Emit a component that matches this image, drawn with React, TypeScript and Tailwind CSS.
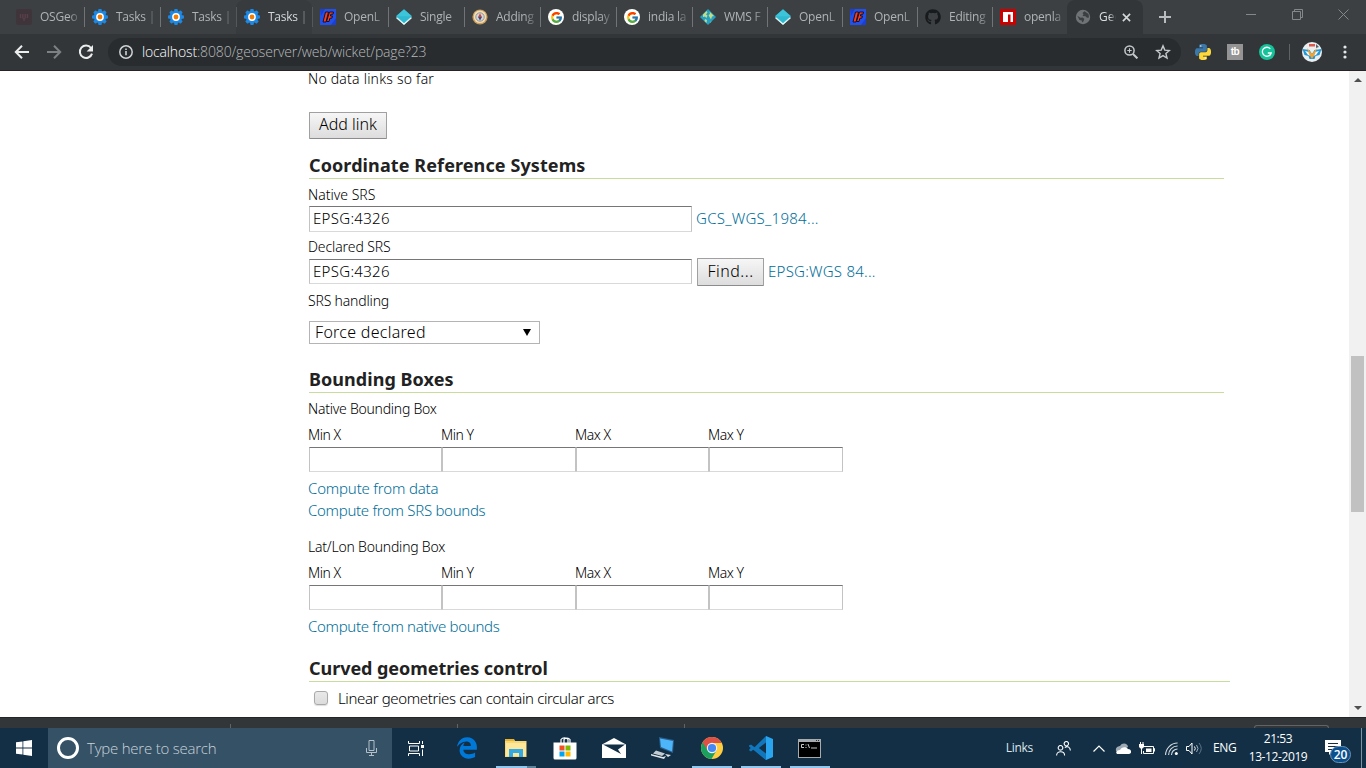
import type { ReactNode } from "react";
import { FaGithub, FaEdgeLegacy } from "react-icons/fa6";
import { FcGoogle } from "react-icons/fc";

function Gear() {
  return (
    <svg viewBox="0 0 16 16" className="size-4">
      {[0, 45, 90, 135].map((a) => (
        <rect key={a} x="6.2" y="0" width="3.6" height="16" rx="1" fill="#1e88e5" transform={`rotate(${a} 8 8)`} />
      ))}
      <circle cx="8" cy="8" r="6.2" fill="#1e88e5" />
      <circle cx="8" cy="8" r="3.9" fill="#fff" />
      <circle cx="8" cy="8" r="2.4" fill="#f57c00" />
    </svg>
  );
}

function Pitchfork() {
  return (
    <svg viewBox="0 0 16 16" className="size-4">
      <rect width="16" height="16" rx="2" fill="#40343b" />
      <path d="M4.500 5v4M6.800 5v4.500M9.200 5v4.500M11.500 5v4M8 9v3" stroke="#574049" strokeWidth="1.3" fill="none" />
    </svg>
  );
}

function FlagF() {
  return (
    <svg viewBox="0 0 16 16" className="size-4">
      <rect width="16" height="16" fill="#2350e8" />
      <path d="M0 0h5L1 7zM11 16l5-7v7z" fill="#1b3fd0" />
      <path d="M5.500 3h3L6 13H3l1-4zM9.500 3h4l-.5 2.200h-2.200L10.400 7h2l-.5 2.200h-2L9 12.500H6.500z" fill="#ff3d14" stroke="#14102c" strokeWidth="1" />
    </svg>
  );
}

function Diamond() {
  return (
    <svg viewBox="0 0 16 16" className="size-4">
      <path d="M8 2.500 15.600 9 8 15.700.4 9z" fill="#f4ffff" stroke="#f4ffff" strokeWidth=".6" strokeLinejoin="round" />
      <path d="M8 .6 15.700 7.200 8 14 .3 7.200z" fill="#2fb9d0" stroke="#2fb9d0" strokeWidth=".6" strokeLinejoin="round" />
      <path d="M8 .6 15.700 7.200H.3z" fill="#3cc4da" />
    </svg>
  );
}

function Compass() {
  return (
    <svg viewBox="0 0 16 16" className="size-4">
      <circle cx="8" cy="8" r="7.6" fill="#c99b5c" />
      <circle cx="8" cy="7.8" r="6.3" fill="#f1ddb4" />
      <circle cx="8" cy="8" r="4.2" fill="#d0d6e0" stroke="#8f8b86" strokeWidth=".9" />
      <path d="M8 4.500 10 8H6z" fill="#d8432e" />
      <path d="M8 11.500 10 8H6z" fill="#35507e" />
    </svg>
  );
}

function Google() {
  return (
    <span className="grid size-4 place-items-center rounded-full bg-white">
      <FcGoogle className="size-[13px]" />
    </span>
  );
}

function WorldTile() {
  return (
    <svg viewBox="0 0 16 16" className="size-4">
      <path d="M8 0 16 8 8 16 0 8z" fill="#23a0c4" />
      <path d="M3 5.500l3.500-3.500 1 1.500-1.500 2 1.500 1-1 2.500-1.500-1.500-2 .5zM9.500 2.500l4.500 4.500-2 .5-1 3-1.500-2.500-1-2 1.500-1zM5 10l2 1-.5 3-2-2z" fill="#c3dc86" />
      <path d="M10 13l2-1-2 2z" fill="#8bc7a2" />
    </svg>
  );
}

function Npm() {
  return (
    <svg viewBox="0 0 16 16" className="size-4">
      <rect width="16" height="16" fill="#cb0000" />
      <path d="M3 3h10v10h-2.500V5.500H8V13H3z" fill="#fff" />
    </svg>
  );
}

function Globe() {
  return (
    <svg viewBox="0 0 16 16" className="size-4">
      <circle cx="8" cy="8" r="7.200" fill="#6f7376" />
      <path d="M2.300 6.800 5.500 8.800 7.800 8.600 9.300 10 8.600 12.300 7 13.500 6.800 11.500 4.500 11zM9.500 2.300 7.500 4 8.500 5.500 7.500 7 10.500 7.200 12 8.800 14 8.500 13.500 5z" fill="#3b3f42" />
    </svg>
  );
}

type TabInfo = { icon: ReactNode; label: string; width: string; hover?: boolean };

const tabs: TabInfo[] = [
  { icon: <Pitchfork />, label: "OSGeo", width: "w-[76px]" },
  { icon: <Gear />, label: "Tasks |", width: "w-[76px]" },
  { icon: <Gear />, label: "Tasks |", width: "w-[76px]" },
  { icon: <Gear />, label: "Tasks |", width: "w-[76px]", hover: true },
  { icon: <FlagF />, label: "OpenL", width: "w-[76px]" },
  { icon: <Diamond />, label: "Single", width: "w-[76px]" },
  { icon: <Compass />, label: "Adding", width: "w-[76px]" },
  { icon: <Google />, label: "display", width: "w-[76px]" },
  { icon: <Google />, label: "india la", width: "w-[76px]" },
  { icon: <WorldTile />, label: "WMS F", width: "w-[75px]" },
  { icon: <Diamond />, label: "OpenL", width: "w-[75px]" },
  { icon: <FlagF />, label: "OpenL", width: "w-[75px]" },
  { icon: <FaGithub className="size-4 text-[#181a1c]" />, label: "Editing", width: "w-[75px]" },
  { icon: <Npm />, label: "openla", width: "w-[75px]" },
];

function TabStrip() {
  return (
    <div className="flex h-[34px] bg-[#3c4042] pl-2 text-[#b0b3b5]">
      {tabs.map((t, i) => (
        <div key={i} className={`flex h-full shrink-0 items-center ${t.width} ${t.hover ? "rounded-t-lg bg-[#383b3e] text-[#d5d7d9]" : ""}`}>
          <span className={`h-5 w-px ${i === 0 ? "" : i === 3 || i === 4 ? "bg-[#54585a]" : "bg-[#707476]"}`} />
          <span className="ml-[7px] shrink-0">{t.icon}</span>
          <span className="ml-2 w-[40px] text-[12px] tracking-[-0.25px] whitespace-nowrap [mask-image:linear-gradient(to_right,black_72%,transparent_105%)]">
            {t.label}
          </span>
        </div>
      ))}
      <div className="flex h-full w-[76px] shrink-0 items-center rounded-t-lg bg-[#323639] pl-2">
        <Globe />
        <span className="ml-2 w-[17px] text-[12px] whitespace-nowrap text-[#dcdedf] [mask-image:linear-gradient(to_right,black_60%,transparent)]">
          Geo
        </span>
        <svg viewBox="0 0 10 10" className="ml-[6px] size-[9px]">
          <path d="M1 1l8 8M9 1L1 9" stroke="#d5d7d9" strokeWidth="1.8" />
        </svg>
      </div>
      <svg viewBox="0 0 12 12" className="mt-[11px] ml-4 size-3 shrink-0">
        <path d="M6 0v12M0 6h12" stroke="#b9bcbe" strokeWidth="2" />
      </svg>
      <div className="mt-[9px] ml-[75px] flex h-[11px] items-center">
        <span className="h-px w-[10px] bg-[#84888a]" />
        <svg viewBox="0 0 11 11" className="ml-[36px] size-[11px]">
          <path d="M.5 2.500h8v8h-8zM2.500 2.500v-2h8v8h-2" stroke="#84888a" fill="none" />
        </svg>
        <svg viewBox="0 0 11 11" className="ml-[35px] size-[11px]">
          <path d="M.5.5l10 10M10.500.5l-10 10" stroke="#84888a" fill="none" />
        </svg>
      </div>
    </div>
  );
}

const snake =
  "M14.25.18l.9.2.73.26.59.3.45.32.34.34.25.34.16.33.1.3.04.26.02.2-.01.13V8.5l-.05.63-.13.55-.21.46-.26.38-.3.31-.33.25-.35.19-.35.14-.33.1-.3.07-.26.04-.21.02H8.77l-.69.05-.59.14-.5.22-.41.27-.33.32-.27.35-.2.36-.15.37-.1.35-.07.32-.04.27-.02.21v3.06H3.17l-.21-.03-.28-.07-.32-.12-.35-.18-.36-.26-.36-.36-.35-.46-.32-.59-.28-.73-.21-.88-.14-1.05-.05-1.23.06-1.22.16-1.04.24-.87.32-.71.36-.57.4-.44.42-.33.42-.24.4-.16.36-.1.32-.05.24-.01h.16l.06.01h8.16v-.83H6.18l-.01-2.75-.02-.37.05-.34.11-.31.17-.28.25-.26.31-.23.38-.2.44-.18.51-.15.58-.12.64-.1.71-.06.77-.04.84-.02 1.27.05z";

function Toolbar() {
  return (
    <div className="flex h-9 items-center bg-[#323639]">
      <svg viewBox="0 0 16 16" className="ml-[14px] size-4">
        <path d="M15 8H2.500M8 1.800 1.800 8 8 14.200" stroke="#eceded" strokeWidth="2" fill="none" />
      </svg>
      <svg viewBox="0 0 16 16" className="ml-4 size-4">
        <path d="M1 8h12.500M8 1.800 14.200 8 8 14.200" stroke="#7d8183" strokeWidth="2" fill="none" />
      </svg>
      <svg viewBox="0 0 16 16" className="ml-4 size-4">
        <path d="M13 4A6.200 6.200 0 1 0 14 9.600" stroke="#eceded" strokeWidth="2" fill="none" />
        <path d="M15 1v6.400H8.600z" fill="#eceded" />
      </svg>
      <div className="ml-[14px] flex h-7 w-[1073px] items-center rounded-full bg-[#282c2f] pl-[11px]">
        <svg viewBox="0 0 14 14" className="size-[14px]">
          <circle cx="7" cy="7" r="6.200" stroke="#d0d2d4" strokeWidth="1.5" fill="none" />
          <path d="M7 6v4.200M7 3.400v1.600" stroke="#d0d2d4" strokeWidth="1.6" />
        </svg>
        <span className="ml-[9px] text-[14px] leading-5 font-light tracking-[-0.15px] text-[#b8bbbd]">
          <span className="text-white">localhost</span>:8080/geoserver/web/wicket/page?23
        </span>
        <svg viewBox="0 0 14 14" className="ml-auto size-[14px]">
          <circle cx="5.500" cy="5.500" r="4.600" stroke="#c6c9cb" strokeWidth="1.5" fill="none" />
          <path d="M9 9l4.400 4.400" stroke="#c6c9cb" strokeWidth="2" />
          <path d="M5.500 3.300v4.400M3.300 5.500h4.400" stroke="#c6c9cb" strokeWidth="1.1" />
        </svg>
        <svg viewBox="0 0 16 16" className="mr-[10px] ml-[17px] size-4">
          <path d="M8 1.900l1.800 4.200 4.600.4-3.500 3 1.100 4.500-4-2.400L4 14l1.100-4.500-3.500-3 4.600-.4z" stroke="#c6c9cb" strokeWidth="1.4" fill="none" />
        </svg>
      </div>
      <svg viewBox="0 0 24 24" className="ml-[14px] size-4">
        <path fill="#3b78a9" d={snake} />
        <path fill="#fdd83c" transform="rotate(180 12 12)" d={snake} />
        <circle cx="8.700" cy="3" r="1" fill="#fff" />
        <circle cx="15.300" cy="21" r="1" fill="#fff" />
      </svg>
      <span className="ml-4 grid size-4 place-items-center bg-[#949494] font-['Liberation_Sans',sans-serif] text-[10px] leading-none font-bold tracking-[-0.5px] text-white">
        tb
      </span>
      <svg viewBox="0 0 16 16" className="ml-4 size-4">
        <circle cx="8" cy="8" r="8" fill="#15c39a" />
        <path d="M11.300 4.800A4.500 4.500 0 1 0 12.200 9H8.800M12.200 9l-1.600 3" stroke="#fff" strokeWidth="1.3" fill="none" />
      </svg>
      <span className="ml-[14px] h-4 w-px bg-[#5f6365]" />
      <svg viewBox="0 0 20 20" className="ml-3 size-5">
        <circle cx="10" cy="10" r="10" fill="#e9eef0" />
        <path d="M.5 7l7 1 2.500 4 2.500-4 7-1-2 6-4 1-1 3h-5l-1-3-4-1z" fill="#2196d3" />
        <path d="M3 9l4 1 2 4-3-1zM17 9l-4 1-2 4 3-1z" fill="#f3f7f8" />
        <path d="M5 6l5 6 5-6-2 6-3 5-3-5z" fill="#f0a233" />
        <path d="M7 2h6v2.500H7z" fill="#e0574c" />
        <path d="M14 2l3 3-3 1z" fill="#59636b" />
      </svg>
      <svg viewBox="0 0 4 14" className="ml-[21px] h-[14px] w-1">
        <circle cx="2" cy="2" r="1.600" fill="#e4e6e7" />
        <circle cx="2" cy="7" r="1.600" fill="#e4e6e7" />
        <circle cx="2" cy="12" r="1.600" fill="#e4e6e7" />
      </svg>
    </div>
  );
}

const field = "shrink-0 border border-t-[#767676] border-x-[#c3c3c3] border-b-[#d9d9d9] bg-white";
const button =
  "shrink-0 rounded-[1px] border border-[#a0a0a0] border-b-[#8c8c8c] bg-gradient-to-b from-[#f6f6f6] to-[#dddddd] text-[16px] text-black";
const link = "text-[15px] leading-[22px] text-[#006e99]";

function Heading({ children, className }: { children: ReactNode; className: string }) {
  return (
    <h2 className={`ml-px h-[25px] border-b border-[#c8dd9c] text-[18px] leading-[22px] font-bold text-[#222] ${className}`}>
      {children}
    </h2>
  );
}

function Bounds() {
  return (
    <>
      <div className="mt-1 flex h-[22px] leading-[22px] tracking-[-0.5px]">
        <span className="w-[133px]">Min X</span>
        <span className="w-[134px]">Min Y</span>
        <span className="w-[133px]">Max X</span>
        <span>Max Y</span>
      </div>
      <div className="mt-px ml-px flex h-[25px]">
        <span className={`${field} w-[133px]`} />
        <span className={`${field} w-[134px]`} />
        <span className={`${field} w-[133px]`} />
        <span className={`${field} w-[134px]`} />
      </div>
    </>
  );
}

function Page() {
  return (
    <div className="flex h-[646px] overflow-hidden bg-white">
      <main className="flex-1 pl-[308px] font-['Noto_Sans',sans-serif] text-[14px] font-light text-black">
        <p className="h-4 leading-[16px] tracking-[0.22px]">No data links so far</p>
        <button className={`${button} mt-[25px] ml-px flex h-[27px] w-[78px] justify-center leading-[23px]`}>Add link</button>
        <Heading className="mt-[15px] w-[915px] tracking-[0.1px]">Coordinate Reference Systems</Heading>
        <p className="mt-[5px] h-[22px] leading-[22px]">Native SRS</p>
        <div className="ml-px flex h-[26px]">
          <div className={`${field} h-[26px] w-[383px] pl-[3px] text-[15px] leading-[23px] tracking-[0.3px]`}>EPSG:4326</div>
          <a className="ml-1 text-[15px] leading-[25px] tracking-[0.28px] text-[#006e99]">GCS_WGS_1984...</a>
        </div>
        <p className="mt-1 h-[22px] leading-[22px] tracking-[-0.1px]">Declared SRS</p>
        <div className="ml-px flex h-7">
          <div className={`${field} mt-px h-[25px] w-[383px] pl-[3px] text-[15px] leading-[23px] tracking-[0.3px]`}>EPSG:4326</div>
          <button className={`${button} ml-[5px] flex h-7 w-[67px] justify-center leading-[24px] tracking-[0.5px]`}>Find...</button>
          <a className="ml-1 text-[15px] leading-[27px] tracking-[0.25px] text-[#006e99]">EPSG:WGS 84...</a>
        </div>
        <p className="mt-1 h-[22px] leading-[22px] tracking-[-0.18px]">SRS handling</p>
        <div className="mt-[9px] ml-px flex h-[23px] w-[231px] items-center border border-[#b4b4b4] bg-white pr-2 pl-[5px] text-[16px] leading-[21px] tracking-[0.28px] text-black">
          <span>Force declared</span>
          <svg viewBox="0 0 8 7" className="ml-auto h-[7px] w-2">
            <path d="M0 0h8L4 7z" fill="#000" />
          </svg>
        </div>
        <Heading className="mt-6 w-[915px] tracking-[0.05px]">Bounding Boxes</Heading>
        <p className="mt-[5px] h-[22px] leading-[22px] tracking-[-0.25px]">Native Bounding Box</p>
        <Bounds />
        <a className={`${link} mt-[5px] block h-[22px] tracking-[-0.18px]`}>Compute from data</a>
        <a className={`${link} block h-[22px] tracking-[-0.3px]`}>Compute from SRS bounds</a>
        <p className="mt-[15px] h-[22px] leading-[22px] tracking-[-0.22px]">Lat/Lon Bounding Box</p>
        <Bounds />
        <a className={`${link} mt-[5px] block h-[22px] tracking-[-0.32px]`}>Compute from native bounds</a>
        <Heading className="mt-5 w-[921px] tracking-[-0.05px]">Curved geometries control</Heading>
        <div className="mt-[5px] flex h-[22px] items-center">
          <span className="ml-[6px] size-[14px] rounded-[3px] border border-[#a9a9a9] bg-gradient-to-b from-[#e9e9e9] to-[#dcdcdc] shadow-[0_1px_1px_#0002]" />
          <span className="ml-[10px] text-[15px] leading-[22px] tracking-[-0.37px]">Linear geometries can contain circular arcs</span>
        </div>
      </main>
      <div className="flex w-[17px] flex-col items-center bg-[#f1f1f1]">
        <svg viewBox="0 0 8 4" className="mt-[7px] h-1 w-2">
          <path d="M0 4h8L4 0z" fill="#505050" />
        </svg>
        <span className="mt-[274px] h-[156px] w-[13px] bg-[#c1c1c1]" />
        <svg viewBox="0 0 8 4" className="mt-auto mb-[7px] h-1 w-2">
          <path d="M0 0h8L4 4z" fill="#505050" />
        </svg>
      </div>
    </div>
  );
}

function Slot({ children, open, multi }: { children: ReactNode; open?: boolean; multi?: boolean }) {
  return (
    <div className="flex h-10 w-[49px] shrink-0 flex-col items-center">
      <div className="grid h-[38px] place-items-center pt-[2px]">{children}</div>
      {open && (
        <div className="flex h-[2px] w-10">
          <span className="flex-1 bg-[#93c6ec]" />
          {multi && <span className="w-[9px] bg-[#5f8299]" />}
        </div>
      )}
    </div>
  );
}

function Taskbar() {
  return (
    <div className="flex h-10 bg-[#122f46] text-white">
      <div className="grid w-12 place-items-center">
        <svg viewBox="0 0 16 16" className="size-4">
          <path d="M0 2.300 6.500 1.400V7.600H0zM7.300 1.300 16 0v7.600H7.300zM0 8.400h6.500v6.200L0 13.700zM7.300 8.400H16V16l-8.700-1.300z" fill="#fff" />
        </svg>
      </div>
      <div className="flex w-[344px] items-center bg-[#345166] pl-[9px]">
        <span className="size-[22px] rounded-full border-[3px] border-white" />
        <span className="ml-2 text-[15px] font-light tracking-[-0.22px] text-[#c9d3da]">Type here to search</span>
        <svg viewBox="0 0 11 16" className="mr-[15px] ml-auto h-4 w-[11px]">
          <path d="M3 .5h5v10H3zM.5 8v4.500h10V8M5.500 12.500v3M3 15.500h5" stroke="#b3c0c9" fill="none" />
        </svg>
      </div>
      <div className="grid w-[50px] place-items-center pr-px">
        <svg viewBox="0 0 17 15" className="h-[15px] w-[17px]">
          <path d="M.5 0v2.500h11V0M.5 15v-2.500h11V15M1.500 5h9v5h-9zM14.500 0v3M14.500 8.500V15" stroke="#fff" fill="none" />
          <path d="M13 4h3v3h-3z" fill="#fff" />
        </svg>
      </div>
      <Slot>
        <FaEdgeLegacy className="size-[22px] text-[#0078d7]" />
      </Slot>
      <Slot open multi>
        <svg viewBox="0 0 22 18" className="h-[18px] w-[22px]">
          <path d="M0 0h9l1 2h11.500v16H0z" fill="#f8d775" />
          <path d="M0 0h9v2H0z" fill="#e9b32d" />
          <path d="M1 4h20v13H1z" fill="#ffe79a" />
          <path d="M4 10h14v8h-4v-4H8v4H4z" fill="#35a9e1" />
        </svg>
      </Slot>
      <Slot>
        <svg viewBox="0 0 24 24" className="size-6">
          <path d="M8 7V3.500a4 3 0 0 1 7 0V7M11 7V3.500a3.500 3 0 0 1 6 0V7" stroke="#fff" strokeWidth="1.200" fill="none" />
          <path d="M.5 6.500h23V22q0 1.500-1.500 1.500H2Q.5 23.500.5 22z" fill="#fff" />
          <path d="M6.500 9.500h5v5h-5z" fill="#f25022" />
          <path d="M12.500 9.500h5v5h-5z" fill="#7fba00" />
          <path d="M6.500 15.500h5v5h-5z" fill="#00a4ef" />
          <path d="M12.500 15.500h5v5h-5z" fill="#ffb900" />
        </svg>
      </Slot>
      <Slot>
        <svg viewBox="0 0 24 20" className="h-5 w-6">
          <path d="M0 6.500 12 0l12 6.500V20H0z" fill="#fff" />
          <path d="M1 6.500h22l-7 5 3 4.500z" fill="#122f46" />
        </svg>
      </Slot>
      <Slot>
        <svg viewBox="0 0 24 22" className="h-[22px] w-6">
          <path d="M8 0l15 3-1 13L9 11z" fill="#2d5f8c" />
          <path d="M9 1.500l13 2.500-1 10.500-11-4.500z" fill="#4db5fa" />
          <path d="M5 13.500l9 3-3 2.500-9-2.500z" fill="#c4ccd3" />
          <path d="M0 17l12 3 3-1-2 3L0 18.500zM14 17l6 1-3 2z" fill="#e1e6ea" />
        </svg>
      </Slot>
      <Slot open>
        <svg viewBox="0 0 22 22" className="size-[22px]">
          <circle cx="11" cy="11" r="11" fill="#ffcd40" />
          <path d="M11 11 1.500 5.500A11 11 0 0 0 10.500 22L15.500 13.500z" fill="#1ba15e" />
          <path d="M11 6h9.800A11 11 0 0 0 1.600 5.300L6.700 13.500z" fill="#de5246" />
          <circle cx="11" cy="11" r="5.200" fill="#f3f3f3" />
          <circle cx="11" cy="11" r="4.100" fill="#4587f3" />
        </svg>
      </Slot>
      <Slot open>
        <svg viewBox="0 0 24 24" className="size-6">
          <path d="M17 0 5.500 11.300 2 8.500.3 9.600v1L15 22.500 17 24z" fill="#1177bd" />
          <path d="M17 24 .3 9v5.600l1.700.9L17 3z" fill="#1177bd" />
          <path d="M17 6.500V17.500L9.800 12z" fill="#122f46" />
          <path d="M0 10.800 1.800 12 0 13.300z" fill="#122f46" />
          <path d="M17 0l7 3v18l-7 3z" fill="#29a5f0" />
        </svg>
      </Slot>
      <Slot open>
        <svg viewBox="0 0 23 19" className="h-[19px] w-[23px]">
          <path d="M0 0h23v19H0z" fill="#a7abae" />
          <path d="M1 3h21v15H1z" fill="#000" />
          <path d="M18 1h1v1h-1zM20 1h1v1h-1z" fill="#333" />
          <path d="M6 5.500H3.500v3H6M8 5.500v1M8 8v1M10 5l1.500 4M13 9h6" stroke="#ddd" strokeWidth=".9" fill="none" />
        </svg>
      </Slot>
      <div className="ml-auto flex items-center text-[12px]">
        <span className="tracking-[-0.3px] text-[#dfe5e9]">Links</span>
        <svg viewBox="0 0 15 15" className="ml-[23px] size-[15px]">
          <path d="M2.500 8a2.300 2.300 0 1 1 4 0 2.300 2.300 0 0 1-4 0zM.6 14.500c0-5 8-5 8 0M8.200 3.200a2.200 2.200 0 1 1 4.300 0 2.200 2.200 0 0 1-4.300 0zM8.800 6.500c3-2 5.400 0 5.600 3" stroke="#fff" strokeWidth="1.100" fill="none" />
        </svg>
        <svg viewBox="0 0 12 7" className="ml-[22px] h-[7px] w-3">
          <path d="M.5 6.500 6 1l5.500 5.500" stroke="#fff" strokeWidth="1.200" fill="none" />
        </svg>
        <svg viewBox="0 0 16 11" className="ml-[10px] h-[11px] w-4">
          <path d="M1 8C0 4 4 3 5 3c2-4 8-3 8 1l-8 5z" fill="#9eaab4" />
          <path d="M2 11c-2-2 0-4 3-4 1-3 6-4 8-1 4 0 4 5 1 5z" fill="#fff" />
        </svg>
        <svg viewBox="0 0 16 13" className="ml-2 h-[13px] w-4">
          <path d="M5 4.500h9.500v7H4.500V9M14.500 6.500h1v3" stroke="#fff" fill="none" />
          <path d="M7 6.500h5.500v3.500H7zM0 2h5v3L3.500 6.500h-2L0 5zM1 0h1v2H1zM3.500 0h1v2h-1z" fill="#fff" />
          <path d="M2.500 6v6" stroke="#fff" />
        </svg>
        <svg viewBox="0 0 13 13" className="ml-[10px] size-[13px]">
          <path d="M.6 13A12 12 0 0 1 12.600 1M3.600 13a9 9 0 0 1 9-9M6.500 13a6 6 0 0 1 6-6" stroke="#d3dbe0" strokeWidth="1.100" fill="none" />
          <circle cx="11.300" cy="11.500" r="1.500" fill="#fff" />
        </svg>
        <svg viewBox="0 0 17 13" className="ml-2 h-[13px] w-[17px]">
          <path d="M.5 4.500h2.500l3-3.500v11l-3-3.500H.5zM8.500 4.500q1.500 2 0 4" stroke="#fff" fill="none" />
          <path d="M10.500 3q3 3.500 0 7" stroke="#9fb0bc" fill="none" />
          <path d="M13 1q4.500 5.500 0 11" stroke="#5e7687" fill="none" />
        </svg>
        <span className="ml-[10px] w-[24px] tracking-[-0.4px]">ENG</span>
        <div className="ml-[11px] w-[60px] text-center leading-[18px] tracking-[-0.4px]">
          <div>21:53</div>
          <div className="whitespace-nowrap">13-12-2019</div>
        </div>
        <div className="relative ml-[17px] h-10 w-[27px]">
          <svg viewBox="0 0 17 16" className="mt-3 h-4 w-[17px]">
            <path d="M0 0h16v12h-9l-3 3v-3H0z" fill="#fff" />
            <path d="M3 3.500h10M3 6.500h10M3 9.500h5" stroke="#122f46" />
          </svg>
          <span className="absolute top-[18px] left-[5px] grid h-[17px] w-[21px] place-items-center rounded-full border border-[#6d93b3] bg-[#0a4f8e] text-[12px] leading-none font-semibold">
            20
          </span>
        </div>
        <span className="mr-1 ml-[9px] h-10 w-px bg-[#7f929f]" />
      </div>
    </div>
  );
}

export default function App() {
  return (
    <div className="h-[768px] w-[1366px] overflow-hidden font-['Open_Sans','Noto_Sans',sans-serif]">
      <TabStrip />
      <Toolbar />
      <div className="h-px bg-[#282225]" />
      <Page />
      <div className="flex h-[11px] items-end border-t border-[#232628] bg-[#323639]">
        <span className="ml-[230px] h-1 w-px bg-[#606467]" />
        <span className="ml-[226px] h-1 w-px bg-[#606467]" />
        <span className="ml-[226px] h-1 w-px bg-[#606467]" />
        <span className="ml-[569px] h-[3px] w-[75px] rounded-t border-x border-t border-[#606467]" />
      </div>
      <Taskbar />
    </div>
  );
}
